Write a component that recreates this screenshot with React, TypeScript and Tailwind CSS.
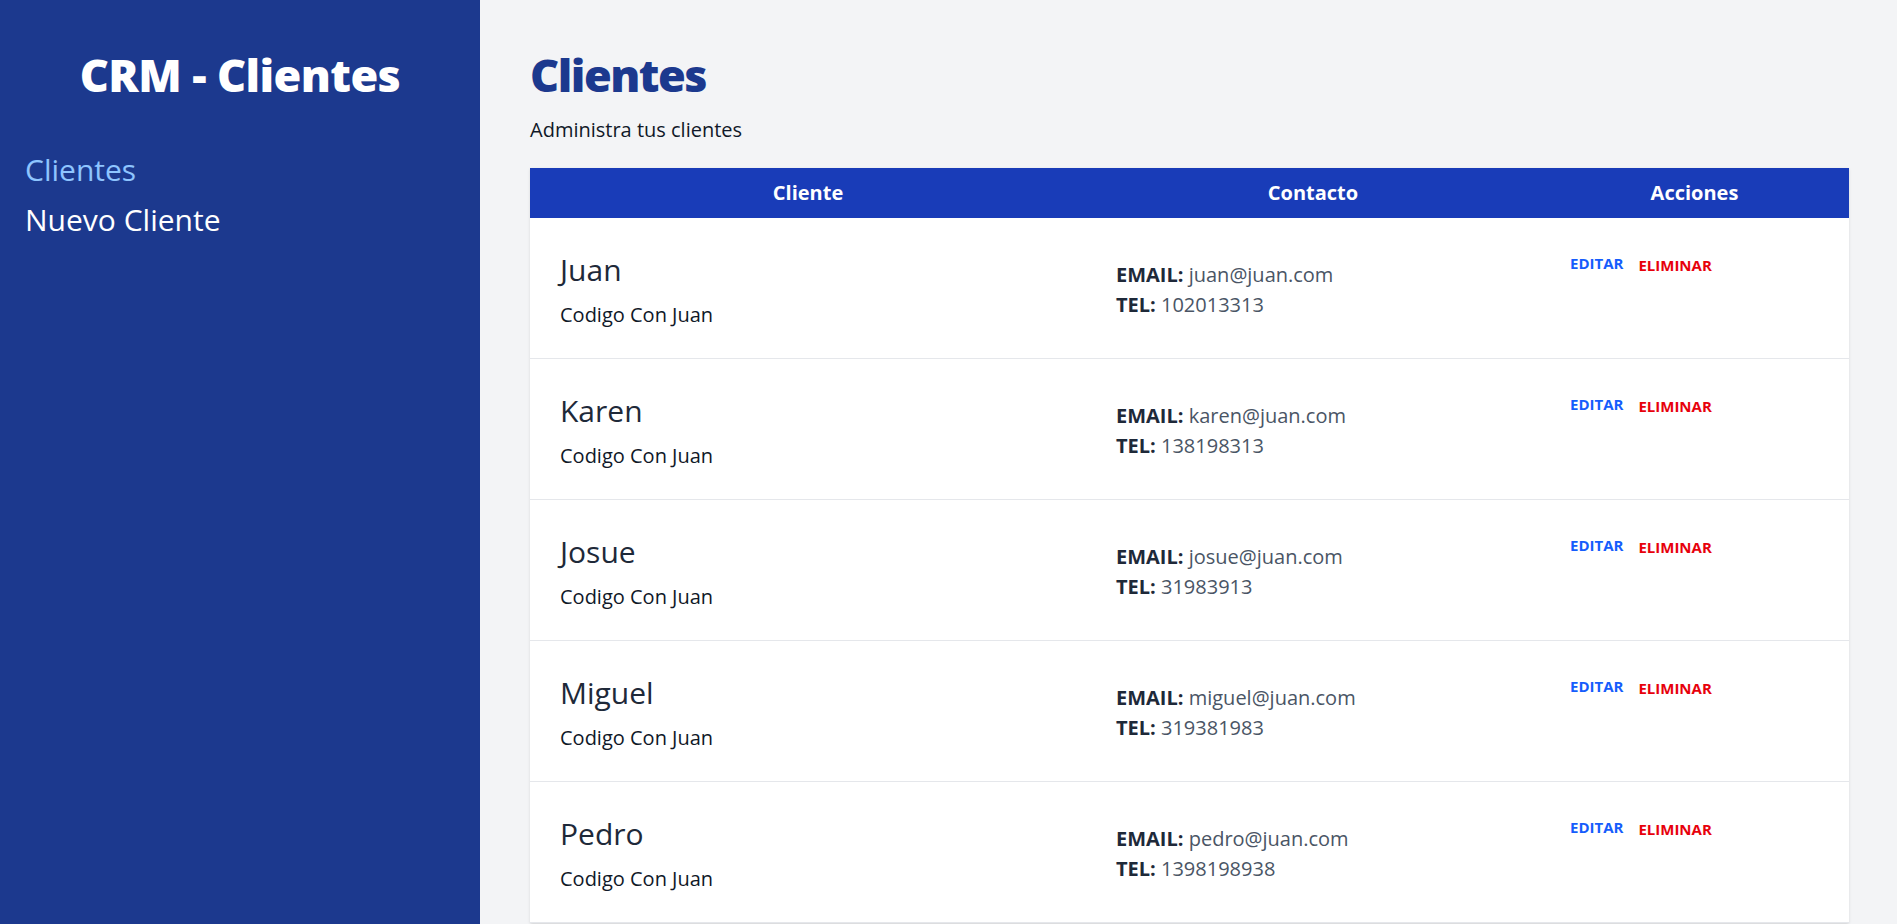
import React from "react";

const clientes = [
  { id: 1, nombre: "Juan", empresa: "Codigo Con Juan", email: "juan@juan.com", telefono: "102013313" },
  { id: 2, nombre: "Karen", empresa: "Codigo Con Juan", email: "karen@juan.com", telefono: "138198313" },
  { id: 3, nombre: "Josue", empresa: "Codigo Con Juan", email: "josue@juan.com", telefono: "31983913" },
  { id: 4, nombre: "Miguel", empresa: "Codigo Con Juan", email: "miguel@juan.com", telefono: "319381983" },
  { id: 5, nombre: "Pedro", empresa: "Codigo Con Juan", email: "pedro@juan.com", telefono: "1398198938" },
];

function Cliente({ cliente }: { cliente: (typeof clientes)[number] }) {
  const { nombre, empresa, email, telefono } = cliente;
  return (
    <tr className="border-b border-gray-200">
      <td className="px-[30px] pt-[32px] pb-[28px]">
        <p className="text-[30px] leading-[40px] text-gray-800">{nombre}</p>
        <p className="mt-[10px] text-[20px] leading-[30px] text-gray-900">{empresa}</p>
      </td>
      <td className="px-[30px] pt-[32px] pb-[28px]">
        <p className="text-[20px] leading-[30px] text-gray-600">
          <span className="font-bold uppercase text-gray-800">Email: </span>
          {email}
        </p>
        <p className="text-[20px] leading-[30px] text-gray-600">
          <span className="font-bold uppercase text-gray-800">Tel: </span>
          {telefono}
        </p>
      </td>
      <td className="p-[30px] pt-[35px] align-top">
        <div className="flex items-start gap-[15px]">
          <button type="button" className="text-[15px] leading-[20px] font-bold uppercase text-blue-600">
            Editar
          </button>
          <button type="button" className="mt-[2px] text-[15px] leading-[20px] font-bold uppercase text-red-600">
            Eliminar
          </button>
        </div>
      </td>
    </tr>
  );
}

export default function App() {
  return (
    <div className="flex min-h-screen font-['Open_Sans',sans-serif]">
      {/* Sidebar */}
      <aside className="w-[480px] shrink-0 bg-blue-900 px-[25px] py-[50px]">
        <h2 className="text-center text-[45px] leading-[50px] font-black tracking-[-0.6px] text-white">
          CRM - Clientes
        </h2>
        <nav className="mt-[50px] flex flex-col gap-[10px]">
          <a href="#" className="text-[30px] leading-[40px] text-blue-300">
            Clientes
          </a>
          <a href="#" className="text-[30px] leading-[40px] text-white">
            Nuevo Cliente
          </a>
        </nav>
      </aside>

      {/* Contenido */}
      <main className="h-screen flex-1 overflow-hidden bg-gray-100 py-[50px] pl-[50px] pr-[48px]">
        <h1 className="text-[45px] leading-[50px] font-black tracking-[-1.5px] text-blue-900">Clientes</h1>
        <p className="mt-[15px] text-[20px] leading-[30px] text-gray-900">Administra tus clientes</p>

        <table className="mt-[23px] w-full table-fixed bg-white shadow">
          <colgroup>
            <col className="w-[556px]" />
            <col className="w-[454px]" />
            <col />
          </colgroup>
          <thead className="bg-blue-800 text-white">
            <tr>
              <th className="p-[10px] text-[20px] leading-[30px] font-bold">Cliente</th>
              <th className="p-[10px] text-[20px] leading-[30px] font-bold">Contacto</th>
              <th className="p-[10px] text-[20px] leading-[30px] font-bold">Acciones</th>
            </tr>
          </thead>
          <tbody>
            {clientes.map((cliente) => (
              <Cliente key={cliente.id} cliente={cliente} />
            ))}
          </tbody>
        </table>
      </main>
    </div>
  );
}
